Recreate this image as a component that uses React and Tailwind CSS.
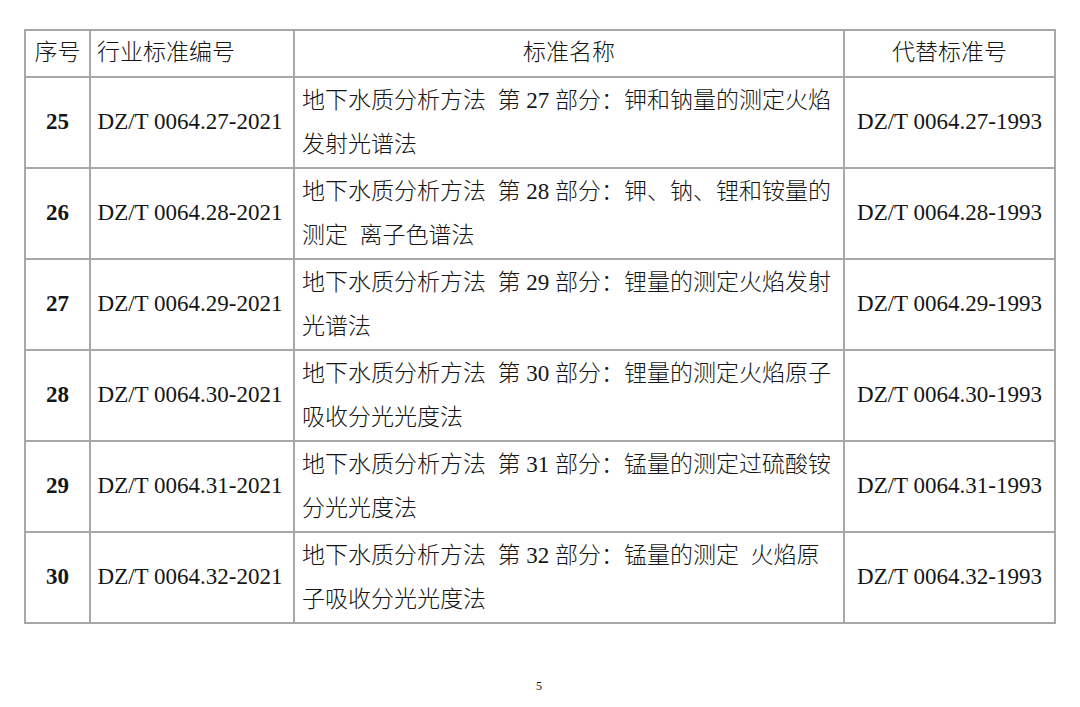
import React from "react";

const rows = [
  { n: "25", id: "27", l1: "钾和钠量的测定火焰", l2: "发射光谱法" },
  { n: "26", id: "28", l1: "钾、钠、锂和铵量的", l2: "测定\u00a0\u00a0离子色谱法" },
  { n: "27", id: "29", l1: "锂量的测定火焰发射", l2: "光谱法" },
  { n: "28", id: "30", l1: "锂量的测定火焰原子", l2: "吸收分光光度法" },
  { n: "29", id: "31", l1: "锰量的测定过硫酸铵", l2: "分光光度法" },
  { n: "30", id: "32", l1: "锰量的测定\u00a0\u00a0火焰原", l2: "子吸收分光光度法" },
];

const cell = "border-2 border-[#a8a8a8] p-0";

export default function App() {
  return (
    <div
      className="w-[1080px] h-[707px] bg-white text-[#151515] overflow-hidden"
      style={{ fontFamily: "'Liberation Serif', 'Noto Sans CJK SC', serif" }}
    >
      <div className="pt-[29px] pl-[24px]">
        <table className="table-fixed border-collapse w-[1030px] text-[23px]">
          <colgroup>
            <col className="w-[65px]" />
            <col className="w-[204px]" />
            <col className="w-[550px]" />
            <col className="w-[211px]" />
          </colgroup>
          <thead>
            <tr className="h-[47px] font-light">
              <th className={`${cell} font-light text-center`}>序号</th>
              <th className={`${cell} font-light text-left pl-[6px]`}>行业标准编号</th>
              <th className={`${cell} font-light text-center`}>标准名称</th>
              <th className={`${cell} font-light text-center`}>代替标准号</th>
            </tr>
          </thead>
          <tbody>
            {rows.map((r) => (
              <tr key={r.n} className="h-[91px]">
                <td className={`${cell} text-center font-bold`}>{r.n}</td>
                <td className={`${cell} text-center whitespace-nowrap pr-[4px]`}>
                  DZ/T 0064.{r.id}-2021
                </td>
                <td className={`${cell} pl-[7px] font-light whitespace-nowrap leading-[44px]`}>
                  <div>
                    地下水质分析方法{"\u00a0\u00a0"}第 {r.id} 部分：{r.l1}
                  </div>
                  <div>{r.l2}</div>
                </td>
                <td className={`${cell} text-center whitespace-nowrap`}>
                  DZ/T 0064.{r.id}-1993
                </td>
              </tr>
            ))}
          </tbody>
        </table>
      </div>
      <div className="mt-[56px] w-[1080px] text-center text-[12px] leading-[12px] pr-[2px]">5</div>
    </div>
  );
}
